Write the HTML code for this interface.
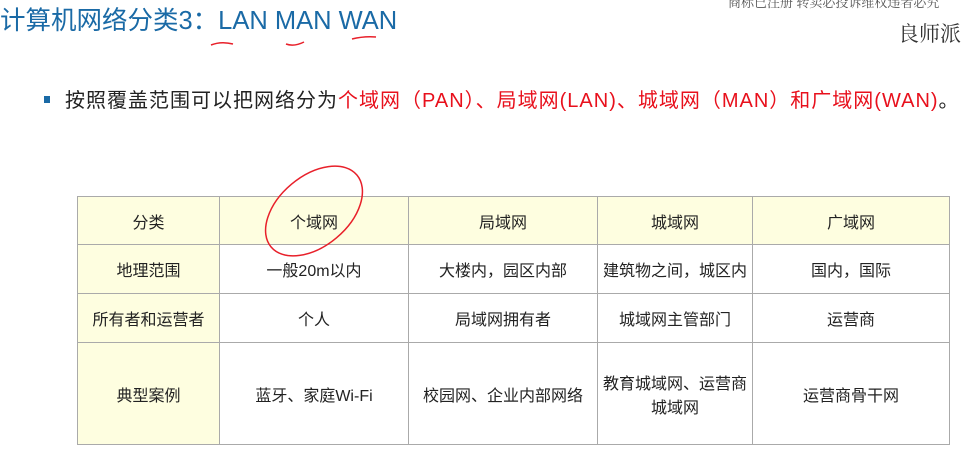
<!DOCTYPE html>
<html><head><meta charset="utf-8"><style>
body{margin:0;width:970px;height:458px;background:#fff;position:relative;overflow:hidden;font-family:"Liberation Sans","Noto Sans CJK SC",sans-serif}
.t{position:absolute;left:0px;top:0px;font-size:25.5px;color:#1a6aa6;white-space:nowrap}
.r1{position:absolute;left:728px;top:-8px;font-size:13px;color:#555;font-family:"Noto Serif CJK SC",serif;white-space:nowrap}
.r2{position:absolute;left:898px;top:18px;font-size:21px;color:#333;font-family:"Noto Serif CJK SC",serif}
.b{position:absolute;left:44px;top:84px;font-size:20px;letter-spacing:1px;color:#222;white-space:nowrap}
.b i{display:inline-block;width:6px;height:7px;background:#1a6aa6;margin-right:15px;vertical-align:middle;position:relative;top:-2px}
.red{color:#e8101c}
table{position:absolute;left:77px;top:196px;border-collapse:collapse;font-size:16px;color:#222}
td{border:1px solid #aaa;text-align:center;padding:0}
.y{background:#fefee0}
</style></head><body>
<div class="t">计算机网络分类3：LAN MAN WAN</div>
<div class="r1">商标已注册 转卖必投诉维权违者必究</div>
<div class="r2">良师派</div>
<div class="b"><i></i>按照覆盖范围可以把网络分为<span class="red">个域网（PAN）、局域网(LAN)、城域网（MAN）和广域网(WAN)</span>。</div>
<table>
<tr style="height:48px" class="y"><td style="width:141px">分类</td><td style="width:188px">个域网</td><td style="width:188px">局域网</td><td style="width:154px">城域网</td><td style="width:196px">广域网</td></tr>
<tr style="height:49px"><td class="y">地理范围</td><td>一般20m以内</td><td>大楼内，园区内部</td><td>建筑物之间，城区内</td><td>国内，国际</td></tr>
<tr style="height:49px"><td class="y">所有者和运营者</td><td>个人</td><td>局域网拥有者</td><td>城域网主管部门</td><td>运营商</td></tr>
<tr style="height:102px"><td class="y">典型案例</td><td>蓝牙、家庭Wi-Fi</td><td>校园网、企业内部网络</td><td>教育城域网、运营商<br>城域网</td><td>运营商骨干网</td></tr>
</table>
<svg style="position:absolute;left:0;top:0" width="970" height="458" fill="none" stroke="#e8202a" stroke-width="1.5">
<path d="M211 45 q10 -4 22 -1"/><path d="M286 44 q8 3 18 -2"/><path d="M352 39 q12 -3 24 -2"/>
<ellipse cx="314" cy="211" rx="56" ry="35" transform="rotate(-40 314 211)"/>
</svg>
</body></html>
